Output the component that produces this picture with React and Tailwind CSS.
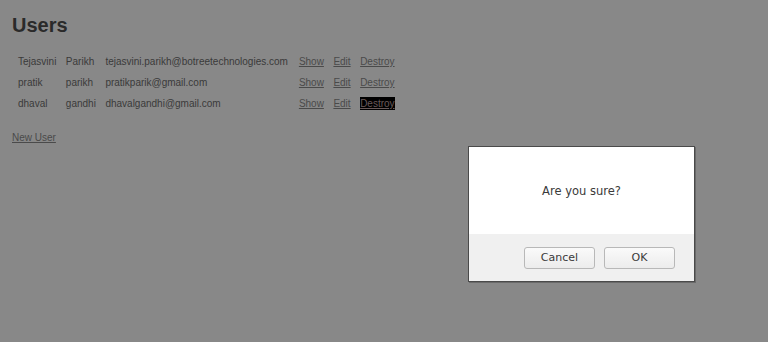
export default function App() {
  const users = [
    ["Tejasvini", "Parikh", "tejasvini.parikh@botreetechnologies.com"],
    ["pratik", "parikh", "pratikparik@gmail.com"],
    ["dhaval", "gandhi", "dhavalgandhi@gmail.com"],
  ];
  return (
    <div className="relative h-[342px] w-full overflow-hidden bg-[#888888] pl-[12px] font-['Liberation_Sans',Arial,sans-serif]">
      <h1 className="pt-[13px] text-[20px] font-bold leading-[24px] text-[#2a2a2a]">Users</h1>
      <div className="mt-[14px] ml-[6px] grid grid-cols-[auto_auto_auto_auto_auto_auto] justify-start gap-x-[9.5px] text-[10px] text-[#3a3a3a]">
        {users.map((u, i) => (
          <div key={i} className="contents">
            <div className="flex h-[21px] items-center">{u[0]}</div>
            <div className="flex h-[21px] items-center">{u[1]}</div>
            <div className="flex h-[21px] items-center pr-[1.5px]">{u[2]}</div>
            <div className="flex h-[21px] items-center"><span className="text-[#4a4a4a] underline">Show</span></div>
            <div className="flex h-[21px] items-center"><span className="text-[#4a4a4a] underline">Edit</span></div>
            <div className="flex h-[21px] items-center">
              {i === 2 ? (
                <span className="bg-black leading-[13px] text-[#6a5a5a] underline">Destroy</span>
              ) : (
                <span className="text-[#4a4a4a] underline">Destroy</span>
              )}
            </div>
          </div>
        ))}
      </div>
      <div className="mt-[17px] text-[10px] leading-[14px] text-[#4a4a4a] underline">New User</div>

      <div className="absolute left-[468px] top-[146px] flex h-[136px] w-[227px] flex-col border border-[#4a4a4a] bg-white shadow-[1px_1px_0_#6a6a6a] font-['DejaVu_Sans',Verdana,sans-serif]">
        <div className="flex h-[87px] items-center justify-center pt-[2px] text-[11.5px] text-[#3a3a3a]">Are you sure?</div>
        <div className="flex flex-1 items-center justify-end gap-[9px] bg-[#f0f0f0] pr-[19px] pt-[1px]">
          <button className="h-[22px] w-[71px] rounded-[3px] border border-[#b8b8b8] bg-gradient-to-b from-[#fafafa] to-[#ececec] text-[11px] text-[#3a3a3a]">Cancel</button>
          <button className="h-[22px] w-[71px] rounded-[3px] border border-[#b8b8b8] bg-gradient-to-b from-[#fafafa] to-[#ececec] text-[11px] text-[#3a3a3a]">OK</button>
        </div>
      </div>
    </div>
  );
}
